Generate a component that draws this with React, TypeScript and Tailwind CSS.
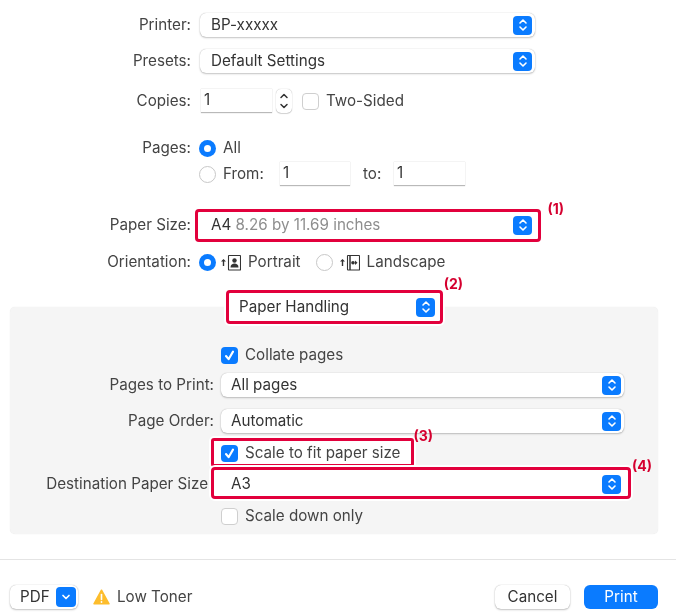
import type { ReactNode } from "react";

const RED = "border-[3px] border-[#e2003c]";

function SelectArrows() {
  return (
    <span className="flex h-[19px] w-[19px] shrink-0 items-center justify-center rounded-[4px] bg-[#0a7bff]">
      <svg width="10" height="14" viewBox="0 0 10 14" fill="none" stroke="white" strokeWidth="1.6" strokeLinecap="round" strokeLinejoin="round">
        <path d="M2 5 5 2l3 3" />
        <path d="M2 9l3 3 3-3" />
      </svg>
    </span>
  );
}

function Select({ children, className = "" }: { children: ReactNode; className?: string }) {
  return (
    <div className={`relative flex h-6 items-center justify-between rounded-[6px] bg-white pl-[11px] pr-[3px] shadow-[0_0_1px_rgba(0,0,0,0.3),0_1px_2px_rgba(0,0,0,0.22)] ${className}`}>
      <span className="whitespace-nowrap text-[15.2px] text-[#333]">{children}</span>
      <SelectArrows />
    </div>
  );
}

function TextBox({ value, className = "" }: { value: string; className?: string }) {
  return (
    <div className={`flex h-6 items-center border-b border-b-[#b9b9b9] bg-white pl-[3px] text-[15.2px] text-[#333] shadow-[0_0_1px_rgba(0,0,0,0.25)] ${className}`}>
      {value}
    </div>
  );
}

function Radio({ on, className = "" }: { on?: boolean; className?: string }) {
  if (on) {
    return (
      <span className={`flex h-[17px] w-[17px] shrink-0 items-center justify-center rounded-full bg-[#0a7bff] ${className}`}>
        <span className="h-[7px] w-[7px] rounded-full bg-white" />
      </span>
    );
  }
  return <span className={`block h-[17px] w-[17px] shrink-0 rounded-full border border-[#c8c8c8] bg-white ${className}`} />;
}

function Check({ on, className = "" }: { on?: boolean; className?: string }) {
  if (on) {
    return (
      <span className={`relative flex h-[17px] w-[17px] shrink-0 items-center justify-center rounded-[4px] bg-[#0a7bff] ${className}`}>
        <svg width="13" height="13" viewBox="0 0 13 13" fill="none" stroke="white" strokeWidth="2.1" strokeLinecap="round" strokeLinejoin="round">
          <path d="M3 7l2.6 3.2L10 2.6" />
        </svg>
      </span>
    );
  }
  return <span className={`block h-[17px] w-[17px] shrink-0 rounded-[4px] border border-[#cfcfcf] bg-white ${className}`} />;
}

function Label({ children, className = "w-[191px]" }: { children: ReactNode; className?: string }) {
  return <span className={`shrink-0 whitespace-nowrap text-right text-[#444] ${className}`}>{children}</span>;
}

function Note({ children, className }: { children: ReactNode; className: string }) {
  return <span className={`absolute text-[14px] font-bold leading-none text-[#d5002f] ${className}`}>{children}</span>;
}

function PortraitIcon() {
  return (
    <svg width="21" height="17" viewBox="0 0 21 17" fill="none" stroke="#333" className="ml-1 shrink-0">
      <path d="M3.500 12V6" strokeWidth="1.400" />
      <path d="M1 7.500 3.500 5 6 7.500z" fill="#333" stroke="none" />
      <rect x="8.500" y="1.500" width="12" height="14.500" rx="0.500" strokeWidth="1.100" />
      <circle cx="14.500" cy="6.500" r="2.200" fill="#333" stroke="none" />
      <path d="M10.500 13.500c0-3 2-4 4-4s4 1 4 4z" fill="#333" stroke="none" />
    </svg>
  );
}

function LandscapeIcon() {
  return (
    <svg width="21" height="17" viewBox="0 0 21 17" fill="none" stroke="#333" className="ml-[6px] shrink-0">
      <path d="M3.500 12V6" strokeWidth="1.400" />
      <path d="M1 7.500 3.500 5 6 7.500z" fill="#333" stroke="none" />
      <rect x="8.500" y="1.500" width="12" height="14.500" rx="0.500" strokeWidth="1.100" />
      <path d="M11 2v14" strokeWidth="1.500" />
      <circle cx="14" cy="8.700" r="1.800" fill="#333" stroke="none" />
      <path d="M16 6.500l2.500 2.200L16 11z" fill="#333" stroke="none" />
    </svg>
  );
}

function Stepper() {
  return (
    <div className="ml-1 flex h-6 w-4 flex-col items-center justify-center rounded-[5px] bg-white shadow-[0_0_1px_rgba(0,0,0,0.35),0_1px_1px_rgba(0,0,0,0.15)]">
      <svg width="10" height="20" viewBox="0 0 10 20" fill="none" stroke="#333" strokeWidth="1.500" strokeLinecap="round" strokeLinejoin="round">
        <path d="M2 6.500 5 3.500l3 3" />
        <path d="M2 13.500l3 3 3-3" />
      </svg>
    </div>
  );
}

export default function App() {
  return (
    <div className="flex h-[615px] w-[676px] flex-col overflow-hidden bg-white font-['Inter','Liberation_Sans',sans-serif] text-[15.2px] blur-[0.35px]">
      <div className="mt-[13px] flex items-center">
        <Label>Printer:</Label>
        <Select className="ml-[9px] w-[335px]">BP-xxxxx</Select>
      </div>
      <div className="mt-3 flex items-center">
        <Label>Presets:</Label>
        <Select className="ml-[9px] w-[335px]">Default Settings</Select>
      </div>
      <div className="mt-4 flex items-center">
        <Label>Copies:</Label>
        <TextBox value="1" className="ml-[10px] w-[71px]" />
        <Stepper />
        <Check className="ml-[10px]" />
        <span className="ml-[7px] text-[#444]">Two-Sided</span>
      </div>

      <div className="mt-[23px] flex h-6 items-center">
        <Label>Pages:</Label>
        <Radio on className="ml-2" />
        <span className="ml-[7px] text-[#444]">All</span>
      </div>
      <div className="mt-[2px] flex h-6 items-center">
        <Radio className="ml-[199px]" />
        <span className="ml-[7px] w-[57px] text-[#444]">From:</span>
        <TextBox value="1" className="w-[70px]" />
        <span className="ml-[13px] w-[31px] text-[#444]">to:</span>
        <TextBox value="1" className="w-[71px]" />
      </div>

      <div className="mt-[27px] flex items-center">
        <Label>Paper Size:</Label>
        <div className="relative ml-[9px] w-[335px]">
          <div className={`absolute -bottom-[5px] -left-[5px] -right-[6px] -top-[4px] rounded-[4px] bg-white ${RED}`} />
          <Select className="shadow-none">
            A4 <span className="text-[#8e8e8e]">8.26 by 11.69 inches</span>
          </Select>
          <Note className="-right-[29px] -top-[11px]">(1)</Note>
        </div>
      </div>

      <div className="mt-[13px] flex h-6 items-center">
        <Label>Orientation:</Label>
        <Radio on className="ml-2" />
        <PortraitIcon />
        <span className="ml-[7px] text-[#444]">Portrait</span>
        <Radio className="ml-[15px]" />
        <LandscapeIcon />
        <span className="ml-[7px] text-[#444]">Landscape</span>
      </div>

      <div className="relative z-10 ml-[231px] mt-[21px] w-[207px]">
        <div className={`absolute -bottom-[5px] -left-[5px] -right-[5px] -top-[5px] rounded-[4px] bg-white shadow-[0_0_0_2px_white] ${RED}`} />
        <Select className="shadow-none !pl-[8px]">Paper Handling</Select>
        <Note className="-right-[25px] -top-[18px]">(2)</Note>
      </div>

      <section className="ml-[10px] -mt-[12px] flex h-[227px] w-[648px] flex-col rounded-[5px] bg-[#f5f5f5] shadow-[0_0_1px_rgba(0,0,0,0.12)]">
        <div className="ml-[211px] mt-[39px] flex h-[18px] items-center">
          <Check on />
          <span className="ml-[7px] text-[#444]">Collate pages</span>
        </div>
        <div className="mt-[9px] flex items-center">
          <Label className="w-[204px]">Pages to Print:</Label>
          <Select className="ml-[7px] w-[403px] !pl-[10px]">All pages</Select>
        </div>
        <div className="mt-3 flex items-center">
          <Label className="w-[204px]">Page Order:</Label>
          <Select className="ml-[7px] w-[403px] !pl-[10px]">Automatic</Select>
        </div>

        <div className="relative ml-[211px] mt-[11px] flex h-[18px] w-[182px] items-center">
          <div className={`absolute -bottom-[5px] -left-[10px] -right-[11px] -top-[6px] rounded-[3px] bg-white shadow-[0_0_0_2px_white] ${RED}`} />
          <Check on />
          <span className="relative ml-[7px] whitespace-nowrap text-[#444]">Scale to fit paper size</span>
          <Note className="-right-[30px] -top-[15px]">(3)</Note>
        </div>

        <div className="mt-[10px] flex items-center">
          <Label className="w-[198px]">Destination Paper Size</Label>
          <div className="relative ml-[13px] w-[403px]">
            <div className={`absolute -bottom-[3px] -left-[10px] -right-[7px] -top-[5px] rounded-[4px] bg-white shadow-[0_0_0_2px_white] ${RED}`} />
            <Select className="shadow-none !pl-[10px]">A3</Select>
            <Note className="-right-[28px] -top-[13px]">(4)</Note>
          </div>
        </div>

        <div className="ml-[211px] mt-2 flex h-6 items-center">
          <Check />
          <span className="ml-[7px] text-[#444]">Scale down only</span>
        </div>
      </section>

      <div className="mt-[25px] h-px bg-[#e4e4e4]" />

      <footer className="mt-[25px] flex h-6 items-center pl-[10px] pr-[18px]">
        <div className="flex h-6 w-[68px] items-center justify-between rounded-[6px] bg-white pl-[10px] pr-[2px] shadow-[0_0_1px_rgba(0,0,0,0.3),0_1px_2px_rgba(0,0,0,0.22)]">
          <span className="text-[#333]">PDF</span>
          <span className="flex h-5 w-5 items-center justify-center rounded-[4px] bg-[#0a7bff]">
            <svg width="10" height="8" viewBox="0 0 10 8" fill="none" stroke="white" strokeWidth="1.700" strokeLinecap="round" strokeLinejoin="round">
              <path d="M2 2.500 5 5.500l3-3" />
            </svg>
          </span>
        </div>
        <svg width="17" height="16" viewBox="0 0 17 16" className="ml-[15px] shrink-0">
          <path d="M8.500 1.200 16 14.800H1z" fill="#fdbd2c" stroke="#fdbd2c" strokeWidth="1.500" strokeLinejoin="round" />
          <path d="M8.500 5.500v5" stroke="white" strokeWidth="1.600" strokeLinecap="round" />
          <circle cx="8.500" cy="13" r="0.900" fill="white" />
        </svg>
        <span className="ml-[7px] text-[#444]">Low Toner</span>
        <button className="ml-auto h-6 w-[75px] rounded-[6px] bg-white text-[#333] shadow-[0_0_1px_rgba(0,0,0,0.3),0_1px_2px_rgba(0,0,0,0.22)]">Cancel</button>
        <button className="ml-[14px] h-6 w-[74px] rounded-[6px] bg-[#0a7bff] text-white">Print</button>
      </footer>
    </div>
  );
}
